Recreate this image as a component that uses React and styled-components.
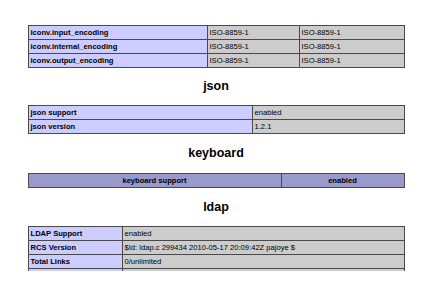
import React from 'react';
import styled, { createGlobalStyle } from 'styled-components';

const GlobalStyle = createGlobalStyle`
  body {
    margin: 0;
    background: #ffffff;
    font-family: "Liberation Sans", Arial, sans-serif;
    color: #000000;
  }
`;

const Page = styled.div`
  height: 271px;
  padding-top: 25px;
  box-sizing: border-box;
  overflow: hidden;
`;

const Table = styled.table`
  width: 376px;
  margin: 0 auto;
  border-collapse: collapse;
  table-layout: fixed;
`;

const Col = styled.col`
  width: ${(p) => p.$w}px;
`;

const Cell = styled.td`
  border: 1px solid #4a4a4a;
  height: 13px;
  padding: 0 2px;
  font-size: 7.6px;
  line-height: 12px;
  vertical-align: middle;
  white-space: nowrap;
  overflow: hidden;
  background: ${(p) => (p.$kind === 'e' ? '#ccccff' : p.$kind === 'h' ? '#9999cc' : '#cccccc')};
  font-weight: ${(p) => (p.$kind === 'v' ? 'normal' : 'bold')};
  text-align: ${(p) => (p.$kind === 'h' ? 'center' : 'left')};
`;

const Heading = styled.h2`
  margin: 0;
  height: ${(p) => p.$h}px;
  line-height: ${(p) => p.$h}px;
  font-size: 12.5px;
  font-weight: bold;
  text-align: center;
`;

const Section = ({ cols, rows, head }) => (
  <Table>
    <colgroup>
      {cols.map((w, i) => (
        <Col key={i} $w={w} />
      ))}
    </colgroup>
    <tbody>
      {rows.map((r, i) => (
        <tr key={i}>
          {r.map((c, j) => (
            <Cell key={j} $kind={head ? 'h' : j === 0 ? 'e' : 'v'}>
              {c}
            </Cell>
          ))}
        </tr>
      ))}
    </tbody>
  </Table>
);

export default function App() {
  return (
    <Page>
      <GlobalStyle />
      <Section
        cols={[179, 92, 105]}
        rows={[
          ['iconv.input_encoding', 'ISO-8859-1', 'ISO-8859-1'],
          ['iconv.internal_encoding', 'ISO-8859-1', 'ISO-8859-1'],
          ['iconv.output_encoding', 'ISO-8859-1', 'ISO-8859-1'],
        ]}
      />
      <Heading $h={37}>json</Heading>
      <Section
        cols={[224, 152]}
        rows={[
          ['json support', 'enabled'],
          ['json version', '1.2.1'],
        ]}
      />
      <Heading $h={39}>keyboard</Heading>
      <Section cols={[253, 123]} head rows={[['keyboard support', 'enabled']]} />
      <Heading $h={38}>ldap</Heading>
      <Section
        cols={[94, 282]}
        rows={[
          ['LDAP Support', 'enabled'],
          ['RCS Version', '$Id: ldap.c 299434 2010-05-17 20:09:42Z pajoye $'],
          ['Total Links', '0/unlimited'],
          ['\u00a0', '\u00a0'],
        ]}
      />
    </Page>
  );
}
